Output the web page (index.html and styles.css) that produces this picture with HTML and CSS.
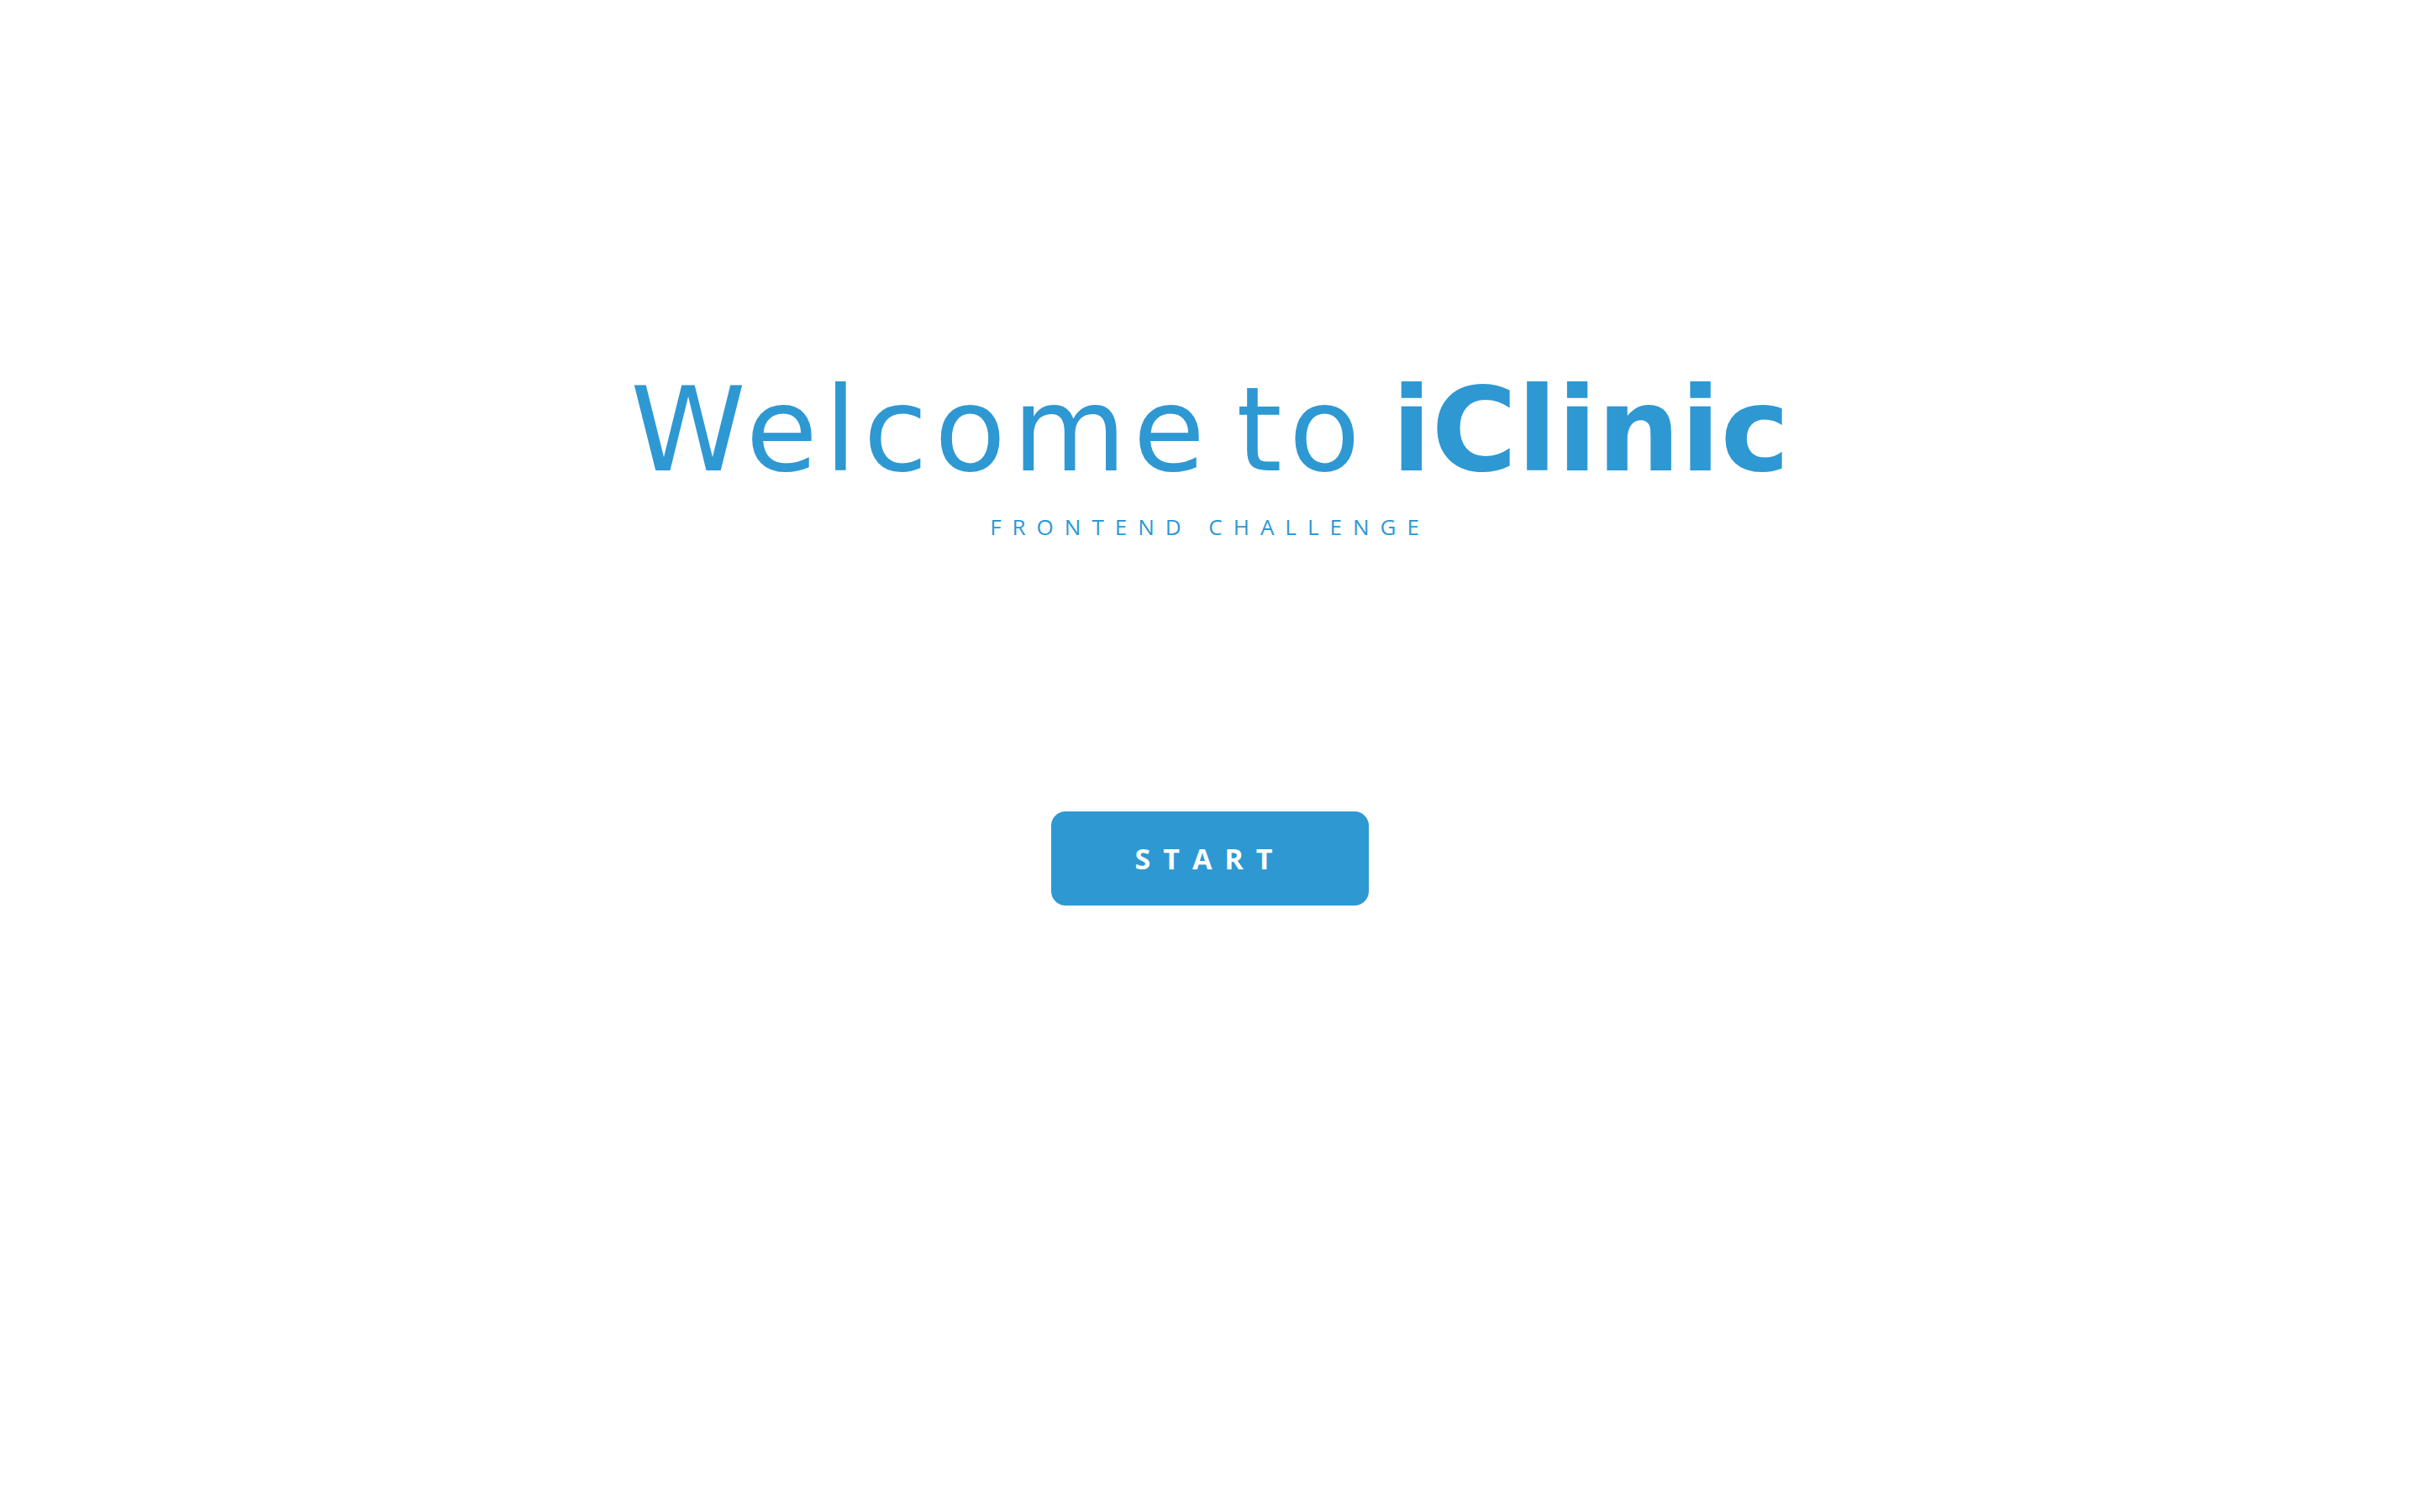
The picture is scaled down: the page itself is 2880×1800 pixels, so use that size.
FILE: index.html
```html
<!DOCTYPE html>
<html lang="en">
<head>
<meta charset="utf-8">
<title>iClinic</title>
<link rel="stylesheet" href="styles.css">
</head>
<body>
<main class="welcome">
  <header class="hero">
    <h1 class="title">Welcome to <strong class="brand">iClinic</strong></h1>
    <p class="subtitle">FRONTEND CHALLENGE</p>
  </header>
  <button class="start-btn" type="button">START</button>
</main>
</body>
</html>
```

FILE: styles.css
```css
html, body {
  margin: 0;
  padding: 0;
  background: #ffffff;
}

body {
  font-family: "Open Sans", "DejaVu Sans", sans-serif;
  color: #2e98d3;
}

.welcome {
  display: flex;
  flex-direction: column;
  align-items: center;
  padding-top: 443px;
  min-height: 1800px;
  box-sizing: border-box;
}

.hero {
  display: flex;
  flex-direction: column;
  align-items: center;
}

.title {
  margin: 0;
  font-family: "DejaVu Sans", "Open Sans", sans-serif;
  font-size: 139px;
  line-height: 1;
  font-weight: 400;
  letter-spacing: 8px;
  word-spacing: -23px;
  white-space: nowrap;
}

.brand {
  font-weight: 700;
  letter-spacing: 0;
}

.subtitle {
  margin: 32px 0 0;
  font-size: 26px;
  font-weight: 400;
  letter-spacing: 0.5em;
  line-height: 1;
}

.start-btn {
  margin-top: 326px;
  width: 378px;
  height: 112px;
  border: none;
  border-radius: 17px;
  background: #2e98d3;
  color: #ffffff;
  font-family: "Open Sans", "DejaVu Sans", sans-serif;
  font-weight: 700;
  font-size: 34px;
  letter-spacing: 15px;
  padding: 0;
}
```
